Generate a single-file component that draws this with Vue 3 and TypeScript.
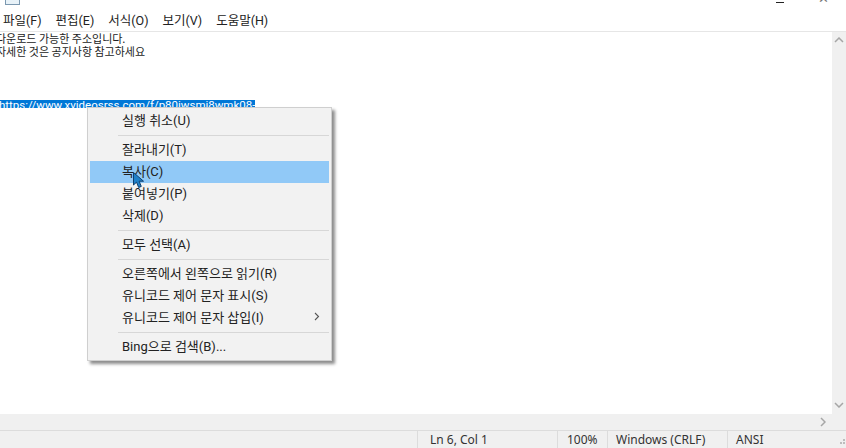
<script setup lang="ts">
const menus = ['파일(F)', '편집(E)', '서식(O)', '보기(V)', '도움말(H)'];
const groups: { label: string; active?: boolean; arrow?: boolean }[][] = [
  [{ label: '실행 취소(U)' }],
  [{ label: '잘라내기(T)' }, { label: '복사(C)', active: true }, { label: '붙여넣기(P)' }, { label: '삭제(D)' }],
  [{ label: '모두 선택(A)' }],
  [{ label: '오른쪽에서 왼쪽으로 읽기(R)' }, { label: '유니코드 제어 문자 표시(S)' }, { label: '유니코드 제어 문자 삽입(I)', arrow: true }],
  [{ label: 'Bing으로 검색(B)...' }],
];
</script>

<template>
  <div class="win">
    <div class="title">
      <span class="doc"></span>
      <span class="title-text">새 텍스트 문서 - Windows 메모장</span>
      <span class="min"></span>
      <span class="close">✕</span>
    </div>
    <div class="menubar">
      <span v-for="m in menus" :key="m">{{ m }}</span>
    </div>
    <div class="middle">
      <div class="editor">
        <div class="line">다운로드 가능한 주소입니다.</div>
        <div class="line">자세한 것은 공지사항 참고하세요</div>
        <div class="url"><span class="sel">https://www.xvideosrss.com/f/p80iwsmi8wmk08-</span></div>

        <div class="ctx">
          <template v-for="(g, i) in groups" :key="i">
            <div v-if="i > 0" class="sep"></div>
            <div v-for="it in g" :key="it.label" class="item" :class="{ on: it.active }">
              <span class="lbl">{{ it.label }}</span>
              <svg v-if="it.arrow" class="arrow" width="6" height="9" viewBox="0 0 6 9"><path d="M1 1l3.5 3.5L1 8" fill="none" stroke="#555" stroke-width="1.1"/></svg>
            </div>
          </template>
        </div>
        <svg class="cursor" width="13" height="17" viewBox="0 0 13 17">
          <path d="M.5.5v12.500l3-2.800 2.200 5.300 2.600-1.100-2.200-5.200h4.400z" fill="#1f80c8" stroke="#0f3f6e" stroke-width="1"/>
        </svg>
      </div>
      <div class="vscroll">
        <svg width="10" height="6" viewBox="0 0 10 6"><path d="M1 5l4-4 4 4" fill="none" stroke="#a6a6a6" stroke-width="1.500"/></svg>
        <svg width="10" height="6" viewBox="0 0 10 6"><path d="M1 1l4 4 4-4" fill="none" stroke="#a6a6a6" stroke-width="1.500"/></svg>
      </div>
    </div>
    <div class="hscroll">
      <svg width="6" height="10" viewBox="0 0 6 10"><path d="M1 1l4 4-4 4" fill="none" stroke="#a6a6a6" stroke-width="1.500"/></svg>
    </div>
    <div class="status">
      <span class="cell c0"></span>
      <span class="cell c1">Ln 6, Col 1</span>
      <span class="cell c2">100%</span>
      <span class="cell c3">Windows (CRLF)</span>
      <span class="cell c4">ANSI</span>
      <svg class="grip" width="12" height="12" viewBox="0 0 12 12"><path d="M9 3h2v2H9zM6 6h2v2H6zM9 6h2v2H9z" fill="#bdbdbd"/></svg>
    </div>
  </div>
</template>

<style>
html, body { margin: 0; background: #fff; overflow: hidden; }
</style>

<style scoped>
.win {
  width: 846px; height: 448px; display: flex; flex-direction: column; overflow: hidden;
  font-family: Roboto, "Noto Sans CJK KR", sans-serif; font-size: 13px; color: #1a1a1a; background: #fff;
}
.title { height: 10px; flex: none; position: relative; overflow: hidden; }
.doc { position: absolute; left: 5px; top: -10px; width: 13px; height: 13px; border: 1px solid #7b98b0; background: #e8f2f8; }
.title-text { position: absolute; left: 50px; top: -13px; font-size: 12px; line-height: 16px; white-space: nowrap; color: #333; }
.min { position: absolute; left: 776px; top: 2px; width: 8px; height: 1px; background: #222; }
.close { position: absolute; left: 818px; top: -8px; font-size: 13px; line-height: 14px; color: #777; }
.menubar { height: 21px; flex: none; display: flex; align-items: center; gap: 14px; padding-left: 3px; font-size: 12.500px; line-height: 21px; color: #222; }
.middle { flex: 1; display: flex; min-height: 0; border-top: 1px solid #e6e6e6; }
.editor { flex: 1; position: relative; overflow: hidden; background: #fff; margin-left: -4px; }
.line { height: 12.500px; line-height: 12.500px; font-size: 11px; white-space: pre; color: #222; font-family: "Noto Sans CJK KR", sans-serif; }
.url { height: 11px; overflow: hidden; margin-top: 40px; white-space: pre; }
.sel { background: #0078d7; color: #fff; display: inline-block; height: 11px; line-height: 11px; padding-left: 3px; font-size: 11.500px; font-family: Roboto, sans-serif; }
.ctx {
  position: absolute; left: 91px; top: 75px; width: 245px; height: 254px; padding: 2px; box-sizing: border-box;
  background: #f2f2f2; border: 1px solid #cfcfcf; box-shadow: 3px 3px 3px rgba(0,0,0,.45); display: flex; flex-direction: column;
}
.item { height: 22px; flex: none; display: flex; align-items: center; padding: 0 9px 3px 32px; box-sizing: border-box; justify-content: space-between; color: #222; }
.item.on { background: #91c9f7; }
.sep { height: 1px; background: #d7d7d7; margin: 3px 0 3px 28px; flex: none; }
.cursor { position: absolute; left: 137px; top: 140px; }
.vscroll { width: 14px; flex: none; background: #f0f0f0; display: flex; flex-direction: column; justify-content: space-between; align-items: center; padding: 5px 0 6px; box-sizing: border-box; }
.hscroll { height: 16px; flex: none; background: #f0f0f0; display: flex; justify-content: flex-end; align-items: center; padding-right: 20px; }
.status { height: 18px; flex: none; position: relative; background: #f0f0f0; border-top: 1px solid #dcdcdc; display: flex; font-family: "Noto Sans", sans-serif; font-size: 12px; line-height: 18px; color: #333; box-sizing: border-box; }
.cell { border-left: 1px solid #dcdcdc; padding-left: 12px; box-sizing: border-box; white-space: nowrap; }
.c0 { width: 417px; border: none; }
.c1 { width: 140px; }
.c2 { width: 50px; padding-left: 9px; }
.c3 { width: 120px; padding-left: 8px; }
.c4 { padding-left: 8px; }
.grip { position: absolute; right: 0; bottom: 0; }
</style>
